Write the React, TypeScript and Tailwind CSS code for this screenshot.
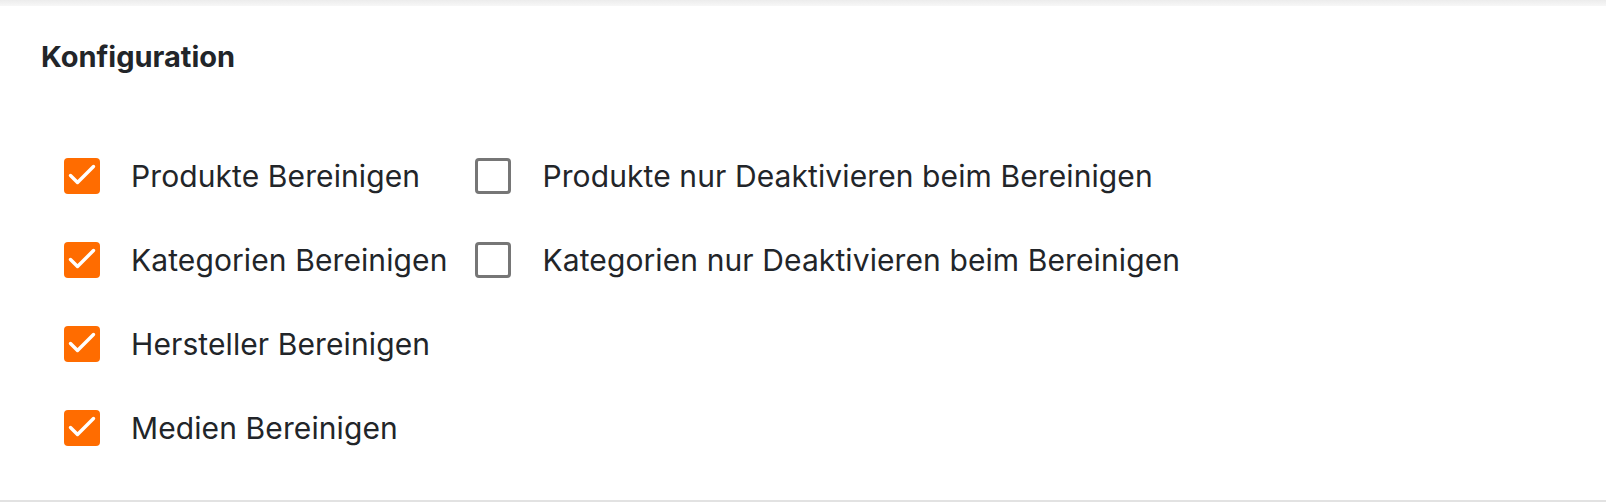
import React from "react";

type Option = { label: string; checked: boolean };

const rows: [Option, Option | null][] = [
  [
    { label: "Produkte Bereinigen", checked: true },
    { label: "Produkte nur Deaktivieren beim Bereinigen", checked: false },
  ],
  [
    { label: "Kategorien Bereinigen", checked: true },
    { label: "Kategorien nur Deaktivieren beim Bereinigen", checked: false },
  ],
  [{ label: "Hersteller Bereinigen", checked: true }, null],
  [{ label: "Medien Bereinigen", checked: true }, null],
];

function Box({ checked }: { checked: boolean }) {
  if (checked) {
    return (
      <span className="block h-[36px] w-[36px] shrink-0 rounded-[4px] bg-[#ff6c00]">
        <svg width="36" height="36" viewBox="0 0 36 36" fill="none">
          <path
            d="M6.5 17.5l7 7L29.5 8.5"
            stroke="#ffffff"
            strokeWidth="3.4"
            strokeLinecap="round"
            strokeLinejoin="round"
          />
        </svg>
      </span>
    );
  }
  return (
    <span className="block h-[36px] w-[36px] shrink-0 rounded-[4px] border-[3px] border-[#767676] bg-white" />
  );
}

function Item({ option }: { option: Option }) {
  return (
    <label className="flex h-[36px] items-center gap-[31px]">
      <Box checked={option.checked} />
      <span className="whitespace-nowrap text-[30px] leading-none tracking-[0.1px] text-[#222529]">
        {option.label}
      </span>
    </label>
  );
}

export default function App() {
  return (
    <div
      className="h-[504px] w-[1606px] overflow-hidden bg-white"
      style={{ fontFamily: "Inter, 'Liberation Sans', sans-serif" }}
    >
      <div className="h-[6px] bg-gradient-to-b from-[#ececec] to-[#f7f7f7]" />
      <div className="flex h-[496px] flex-col border-b-2 border-[#e2e2e2] px-[41px]">
        <h2 className="mt-[31px] text-[29px] font-bold leading-[40px] text-[#222529]">
          Konfiguration
        </h2>
        <div className="mt-[81px] grid grid-cols-[auto_auto] justify-start gap-x-[28px] gap-y-[48px] pl-[23px]">
          {rows.map(([a, b], i) => (
            <React.Fragment key={i}>
              <Item option={a} />
              {b ? <Item option={b} /> : <div />}
            </React.Fragment>
          ))}
        </div>
      </div>
    </div>
  );
}
